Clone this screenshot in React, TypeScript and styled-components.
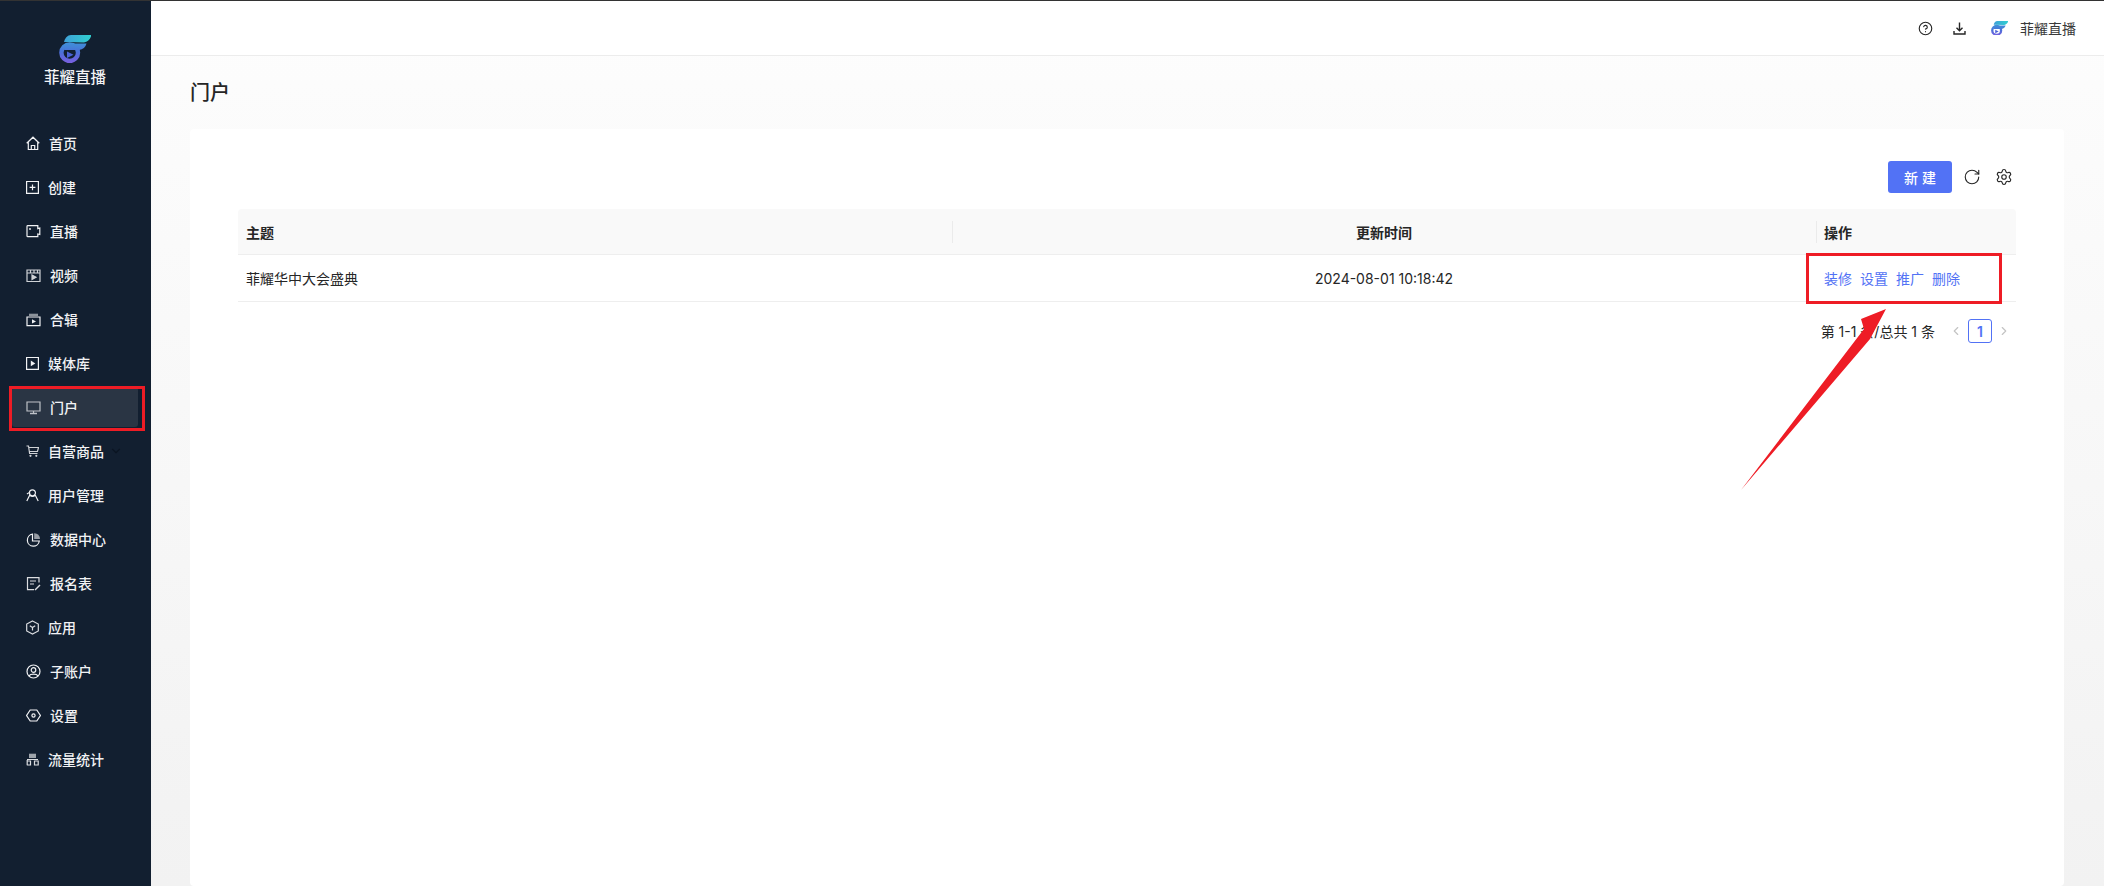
import React from "react";
import styled, { createGlobalStyle } from "styled-components";
import { CircleHelp, RotateCw, Settings, ChevronDown, ChevronLeft, ChevronRight } from "lucide-react";

const Global = createGlobalStyle`
  html, body { margin: 0; padding: 0; height: 100%; overflow: hidden; }
  body { font-family: Inter, "Noto Sans CJK SC", "Liberation Sans", sans-serif; font-size: 14px; color: #262626; }
`;
const Page = styled.div`
  position: relative; width: 2104px; height: 886px; display: flex; overflow: hidden;
  border-top: 1px solid #333; box-sizing: border-box; background: #fff;
`;
const Sidebar = styled.aside`
  width: 151px; flex: none; background: #121f30; display: flex; flex-direction: column; color: #f2f3f5;
`;
const Brand = styled.div`
  height: 120px; display: flex; flex-direction: column; align-items: center; padding: 34px 1px 0 0; box-sizing: border-box; gap: 4px;
`;
const BrandName = styled.div`font-size: 15.5px; font-weight: 500; line-height: 22px;`;
const Nav = styled.nav`display: flex; flex-direction: column;`;
const NavItem = styled.div<{ $active?: boolean }>`
  height: 44px; display: flex; align-items: center; gap: 9px; padding-left: 26px; margin-right: 13px;
  box-sizing: border-box; font-size: 14px; font-weight: 500; color: #f1f2f4; position: relative; z-index: 0;
  ${p => p.$active ? `&::before { content: ""; position: absolute; z-index: -1; left: 12px; right: 0; top: 2px; bottom: 2px; background: #2a3544; border-radius: 3px; }` : ""}
`;
const Chevron = styled(ChevronDown)`width: 14px; height: 14px; color: #0b1522; margin-left: -4px; flex: none;`;
const Main = styled.main`flex: 1; display: flex; flex-direction: column; min-width: 0; background: linear-gradient(#fdfdfd, #f2f2f2);`;
const TopBar = styled.header`
  height: 55px; flex: none; background: #fff; border-bottom: 1px solid #ececec; display: flex; align-items: center; justify-content: flex-end;
  padding-right: 28px; box-sizing: border-box; color: #262626;
`;
const TopIcon = styled.span<{ $gap: number }>`display: inline-flex; margin-right: ${p => p.$gap}px; svg { width: 15px; height: 15px; display: block; }`;
const TopName = styled.span`font-size: 14px; margin-left: 12px; color: #3a3a3a;`;
const PageTitle = styled.h1`
  margin: 0; height: 73px; padding: 24px 0 0 39px; box-sizing: border-box; font-size: 20px; font-weight: 500; line-height: 26px; color: #262626;
`;
const Card = styled.section`
  flex: 1; margin: 0 40px 0 39px; background: #fff; border-radius: 4px; padding: 32px 48px 0 48px;
`;
const Toolbar = styled.div`height: 48px; display: flex; justify-content: flex-end; align-items: flex-start; gap: 10px; padding-right: 2px;`;
const ToolGroup = styled.div`display: flex; gap: 12px;`;
const PrimaryButton = styled.button`
  width: 64px; height: 32px; border: 0; border-radius: 3px; background: #5272f5; color: #fff; font: 500 14px Inter, "Noto Sans CJK SC", sans-serif; letter-spacing: 4px; padding: 0 0 0 4px;
`;
const ToolIcon = styled.span`width: 20px; height: 32px; display: inline-flex; align-items: center; justify-content: center; color: #262626; svg { width: 18px; height: 18px; }`;
const Table = styled.div`display: flex; flex-direction: column;`;
const Row = styled.div<{ $head?: boolean }>`
  display: grid; grid-template-columns: 714px 864px 200px; height: ${p => p.$head ? 46 : 47}px; align-items: center;
  border-bottom: 1px solid #eeeeee; box-sizing: border-box;
  background: ${p => p.$head ? "#f9f9f9" : "#fff"}; font-weight: ${p => p.$head ? 600 : 400}; font-size: 14px;
  ${p => p.$head ? "border-radius: 4px 4px 0 0;" : ""}
`;
const Cell = styled.div<{ $center?: boolean; $sep?: boolean }>`
  padding-left: ${p => p.$center ? 0 : 8}px; text-align: ${p => p.$center ? "center" : "left"}; position: relative; color: #262626;
  ${p => p.$sep ? `&::before { content: ""; position: absolute; left: 0; top: -1px; height: 22px; width: 1px; background: #ebebeb; }` : ""}
`;
const Actions = styled.div`display: flex; gap: 8px; padding-left: 8px;`;
const Action = styled.a`color: #5272f5; font-size: 14px;`;
const Pager = styled.div`display: flex; justify-content: flex-end; align-items: center; height: 24px; margin-top: 17px; padding-right: 5px; font-size: 14px; color: #262626;`;
const PageNo = styled.span`
  width: 24px; height: 24px; border: 1px solid #5272f5; border-radius: 3px; box-sizing: border-box; display: flex; align-items: center; justify-content: center;
  color: #5272f5; font-weight: 600; font-size: 14px; margin: 0 5px;
`;
const PageArrow = styled.span`display: inline-flex; color: #c4c4c4; svg { width: 14px; height: 14px; }`;
const PagerTotal = styled.span`margin-right: 14px;`;
const RedBox = styled.div<{ $x: number; $y: number; $w: number; $h: number }>`
  position: absolute; left: ${p => p.$x}px; top: ${p => p.$y}px; width: ${p => p.$w}px; height: ${p => p.$h}px;
  border: 3px solid #ee1c25; box-sizing: border-box; pointer-events: none;
`;
const ArrowSvg = styled.svg`position: absolute; left: 0; top: 0; pointer-events: none;`;
const NavGlyph = styled.svg`flex: none; fill: none; stroke: currentColor; stroke-width: 1.2;`;

const Logo = ({ w, id }: { w: number; id: string }) => (
  <svg width={w} height={w * 28 / 32} viewBox="0 0 32 28">
    <defs>
      <linearGradient id={id + "a"} x1="0" x2="1"><stop offset="0" stopColor="#3fa0d8" /><stop offset="1" stopColor="#2fd0cf" /></linearGradient>
      <linearGradient id={id + "b"} gradientUnits="userSpaceOnUse" x1="0" x2="0" y1="8" y2="28"><stop offset="0" stopColor="#3f90d8" /><stop offset=".45" stopColor="#4a70d8" /><stop offset="1" stopColor="#7a5fe0" /></linearGradient>
    </defs>
    <path d="M5 7C6 3 8.500 0 12 0H32.500C31.500 3.500 29 7 25 7.500Z" fill={`url(#${id}a)`} />
    <circle cx="10.700" cy="17.700" r="8.300" fill="none" strokeWidth="4.400" stroke={`url(#${id}b)`} />
    <path d="M7 8.500H27.500C26.500 12 24 14.500 20 15H5Z" fill={`url(#${id}b)`} />
    <path d="M8 16.500L14.500 19.800L8 23Z" fill="#4a62d8" />
  </svg>
);

const icons: Record<string, [number, React.ReactNode]> = {
  首页: [14, <path d="M.7 7.300L7 1.200L13.300 7.300M2.300 6V13.500H11.700V6M5.300 13.500V9.500H8.700V13.500" />],
  创建: [13, <path d="M.6 1.500H12.400V13.300H.6ZM6.500 4.500V10.300M3.600 7.400H9.400" />],
  直播: [15, <><path d="M1 2.500C1 2 1.400 1.700 1.800 1.700H11.800V4.600L13.800 4V10.500L11.800 10V12.700H1.800C1.400 12.700 1 12.400 1 12Z" /><circle cx="4" cy="5" r=".9" fill="currentColor" stroke="none" /></>],
  视频: [15, <g opacity=".85"><path d="M1 2H14V13.500H1ZM1 5H14M4.500 2V5M8 2V5M11.500 2V5" /><path d="M6 7L10 9.200L6 11.400Z" fill="currentColor" /></g>],
  合辑: [15, <g><path d="M1 5H14V13.700H1Z" /><path d="M3 1.700H12V4H3Z" fill="currentColor" stroke="none" opacity=".55" /><path d="M6 7.300L10 9.400L6 11.500Z" fill="currentColor" stroke="none" /></g>],
  媒体库: [13, <><path d="M.6 1.500H12.400V13.300H.6Z" /><path d="M4.800 4.500L9.300 7.400L4.800 10.300Z" fill="currentColor" stroke="none" /></>],
  门户: [15, <g opacity=".75"><path d="M1 2H14V11H1ZM7.500 11V13.500" /><path d="M4 13.500H11" strokeWidth="1.500" /></g>],
  自营商品: [13, <g opacity=".85"><path d="M.5 2H2.500L3.600 9.500H11.500M3 3.500H12.500L11.500 7.500H3.300" /><circle cx="4.500" cy="11.800" r="1.100" fill="currentColor" stroke="none" /><circle cx="10.300" cy="11.800" r="1.100" fill="currentColor" stroke="none" /></g>],
  用户管理: [13, <path d="M6.500 1.800A3 3 0 1 1 6.400 7.800A3 3 0 0 1 6.500 1.800ZM.8 13L3.800 7M12.200 13L9.200 7M3.800 7C5.500 9 7.500 9 9.200 7M3.500 4.500C2.500 5 1.500 5.500 1 6" />],
  数据中心: [15, <><path d="M6.500 2.200A6 6 0 1 0 13.300 9H6.500Z" /><path d="M8.200 1.300A5.500 5.500 0 0 1 14 7H8.200Z" fill="currentColor" stroke="none" opacity=".6" /></>],
  报名表: [15, <g opacity=".9"><path d="M13 6.500V1.700H1.500V13.700H8M4 5H10M4 8H8" /><path d="M8.500 13.500L13.500 8.500L14.500 9.500L9.500 14.500Z" fill="currentColor" stroke="none" /></g>],
  应用: [13, <g opacity=".9"><path d="M6.500 1L12.300 4V11L6.500 14L.7 11V4ZM3.800 5.800L6.500 7.500L9.200 5.800M6.500 7.500V10.500" /></g>],
  子账户: [15, <><circle cx="7.500" cy="7.500" r="6.500" /><circle cx="7.500" cy="6" r="2.300" /><path d="M3 11.800C4.500 9.500 10.500 9.500 12 11.800" /></>],
  设置: [15, <><path d="M4.200 2H10.800L14.400 7.500L10.800 13H4.200L.6 7.500Z" /><circle cx="7.500" cy="7.500" r="1.600" /></>],
  流量统计: [13, <g opacity=".9"><path d="M3 1.700H10V6H3Z" fill="currentColor" stroke="none" opacity=".7" /><path d="M1.200 8V13M.8 13H4.500V9H.8M8.500 13H12.200V9H8.500ZM1 7.500H12" /></g>],
};
const names = Object.keys(icons);

export default function App() {
  return (
    <Page>
      <Global />
      <Sidebar>
        <Brand>
          <Logo w={32} id="b" />
          <BrandName>菲耀直播</BrandName>
        </Brand>
        <Nav>
          {names.map(t => (
            <NavItem key={t} $active={t === "门户"}>
              <NavGlyph width={icons[t][0]} height="15" viewBox={`0 0 ${icons[t][0]} 15`}>{icons[t][1]}</NavGlyph>
              <span>{t}</span>
              {t === "自营商品" && <Chevron />}
            </NavItem>
          ))}
        </Nav>
      </Sidebar>
      <Main>
        <TopBar>
          <TopIcon $gap={19}><CircleHelp strokeWidth={1.8} /></TopIcon>
          <TopIcon $gap={24}>
            <svg viewBox="0 0 15 15" fill="none" stroke="currentColor" strokeWidth="1.4"><path d="M7.500 1.500V9.500M4.500 6.800L7.500 9.800L10.500 6.800M2 10V13H13V10" /></svg>
          </TopIcon>
          <Logo w={17} id="t" />
          <TopName>菲耀直播</TopName>
        </TopBar>
        <PageTitle>门户</PageTitle>
        <Card>
          <Toolbar>
            <PrimaryButton>新建</PrimaryButton>
            <ToolGroup>
              <ToolIcon><RotateCw strokeWidth={1.5} /></ToolIcon>
              <ToolIcon><Settings strokeWidth={1.5} /></ToolIcon>
            </ToolGroup>
          </Toolbar>
          <Table>
            <Row $head>
              <Cell>主题</Cell>
              <Cell $center $sep>更新时间</Cell>
              <Cell $sep>操作</Cell>
            </Row>
            <Row>
              <Cell>菲耀华中大会盛典</Cell>
              <Cell $center>2024-08-01 10:18:42</Cell>
              <Actions><Action>装修</Action><Action>设置</Action><Action>推广</Action><Action>删除</Action></Actions>
            </Row>
          </Table>
          <Pager>
            <PagerTotal>第 1-1 条/总共 1 条</PagerTotal>
            <PageArrow><ChevronLeft /></PageArrow>
            <PageNo>1</PageNo>
            <PageArrow><ChevronRight /></PageArrow>
          </Pager>
        </Card>
      </Main>
      <RedBox $x={9} $y={385} $w={136} $h={45} />
      <RedBox $x={1806} $y={252} $w={196} $h={51} />
      <ArrowSvg width="2104" height="886">
        <path d="M1886 308L1870 338L1741 489L1864 328L1861 318Z" fill="#ee1c25" />
      </ArrowSvg>
    </Page>
  );
}
